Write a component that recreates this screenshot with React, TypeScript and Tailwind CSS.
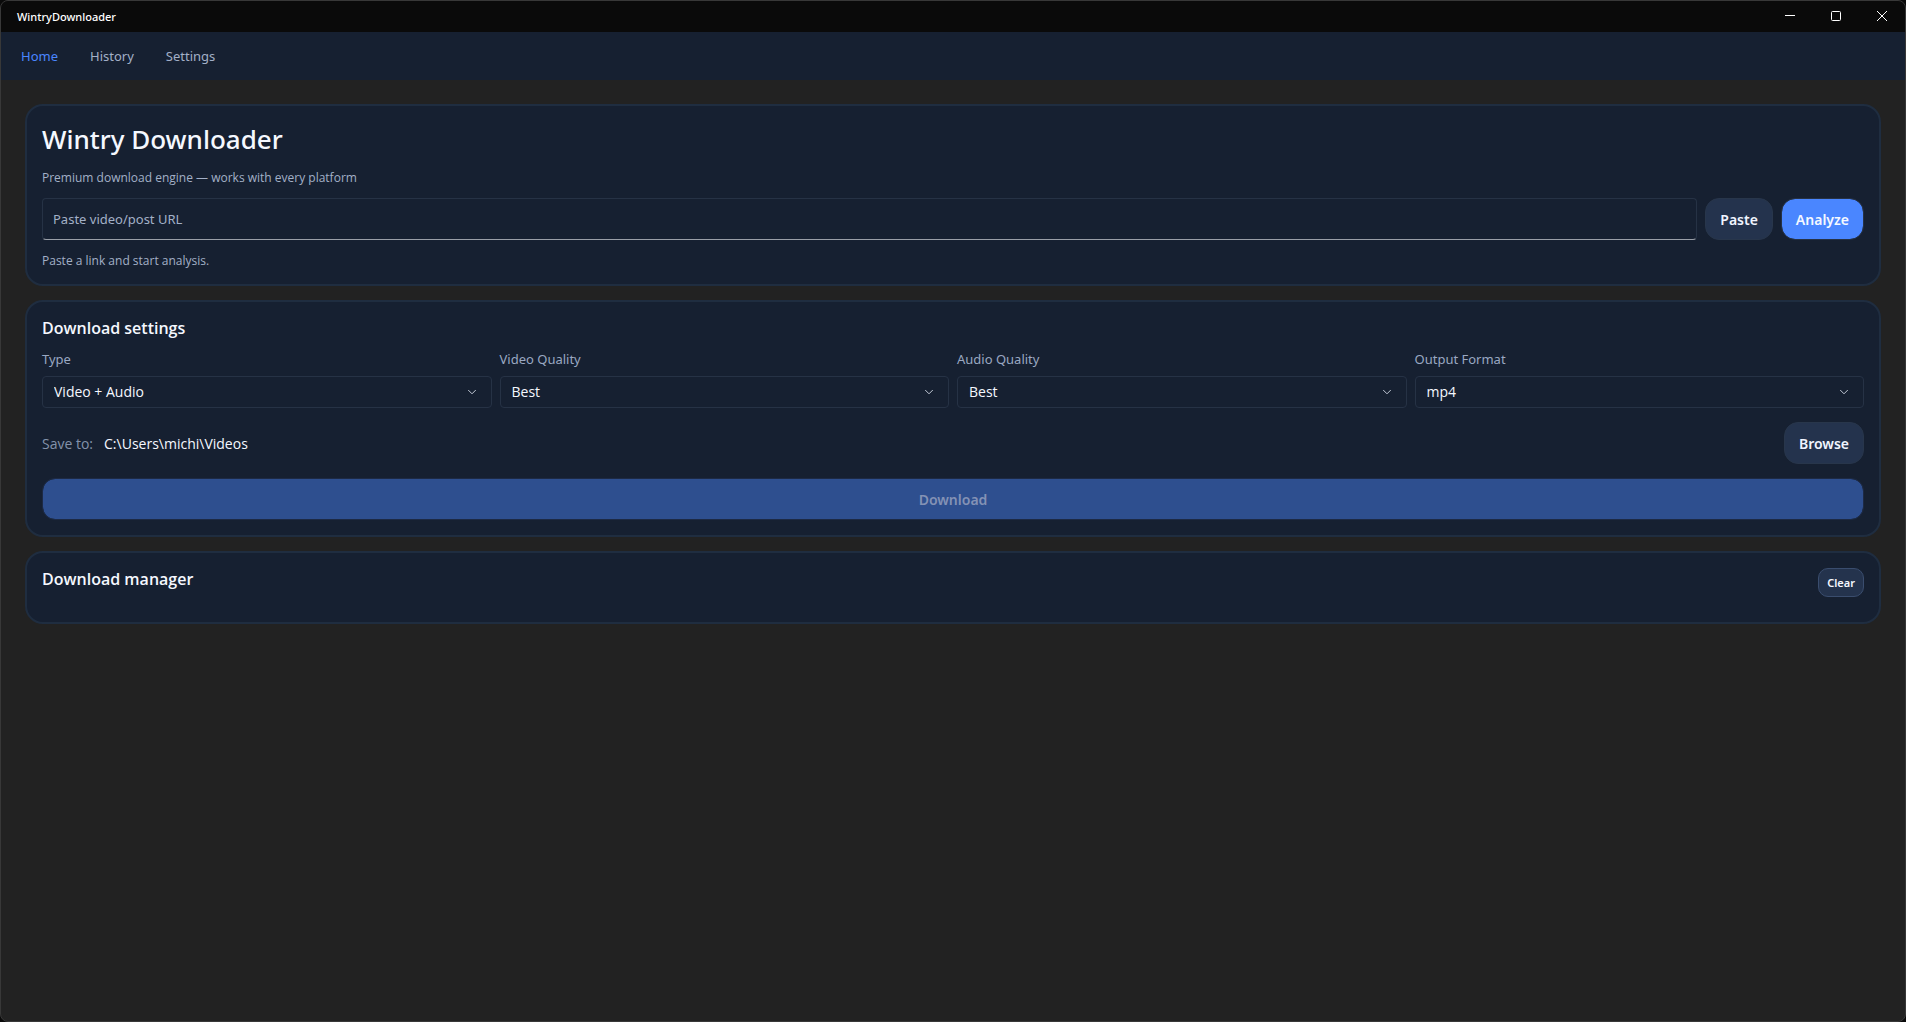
import { useState } from "react";

const tabs = ["Home", "History", "Settings"];

const fields = [
  { id: "type", label: "Type", options: ["Video + Audio", "Video only", "Audio only"] },
  { id: "video-quality", label: "Video Quality", options: ["Best", "1080p", "720p"] },
  { id: "audio-quality", label: "Audio Quality", options: ["Best", "320k", "128k"] },
  { id: "output-format", label: "Output Format", options: ["mp4", "mkv", "webm"] },
];

const cardClass = "rounded-[18px] border-2 border-[#1f2d40] bg-[#162031] p-[15px]";
const headingClass = "font-['Open_Sans',sans-serif] text-base font-semibold leading-[22px] text-[#f5f8ff]";
const noteClass = "font-['Open_Sans',sans-serif] text-xs leading-4 text-[#a3b0c7]";
const secondaryClass =
  "h-[42px] shrink-0 rounded-[14px] border border-[#28364b] bg-[#24334d] px-[14px] pt-0.5 text-sm font-semibold text-[#f1f5ff]";

function TitleBar() {
  return (
    <header className="flex h-[31px] shrink-0 items-center justify-between bg-[#0a0a0a] pl-4 text-white">
      <span className="text-[11px] font-medium leading-4">WintryDownloader</span>
      <div className="flex h-[30px] self-start">
        <button aria-label="Minimize" className="flex w-[46px] items-center justify-center">
          <svg width="10" height="10" viewBox="0 0 10 10" stroke="currentColor" fill="none">
            <path d="M0 4.5H10" />
          </svg>
        </button>
        <button aria-label="Maximize" className="flex w-[46px] items-center justify-center">
          <svg width="10" height="10" viewBox="0 0 10 10" stroke="currentColor" fill="none">
            <rect x="0.5" y="0.5" width="9" height="9" rx="1" />
          </svg>
        </button>
        <button aria-label="Close" className="flex w-[46px] items-center justify-center">
          <svg width="10" height="10" viewBox="0 0 10 10" stroke="currentColor" fill="none">
            <path d="M0 0L10 10M10 0L0 10" />
          </svg>
        </button>
      </div>
    </header>
  );
}

function SelectField({ id, label, options }: { id: string; label: string; options: string[] }) {
  return (
    <div className="flex flex-col gap-[7px]">
      <label htmlFor={id} className="text-[13px] leading-5 text-[#9aa8c2]">
        {label}
      </label>
      <div className="relative">
        <select
          id={id}
          className="block h-8 w-full appearance-none rounded border border-[#263245] bg-[#162031] pl-[11px] pr-8 font-['Open_Sans',sans-serif] text-sm text-[#f5f8ff]"
        >
          {options.map((o) => (
            <option key={o}>{o}</option>
          ))}
        </select>
        <svg
          className="pointer-events-none absolute right-4 top-3 text-[#c3cad6]"
          width="8"
          height="8"
          viewBox="0 0 8 8"
          fill="none"
          stroke="currentColor"
          strokeLinecap="round"
          strokeLinejoin="round"
        >
          <path d="M0.5 2.3L4 5.8L7.5 2.3" />
        </svg>
      </div>
    </div>
  );
}

export default function App() {
  const [active, setActive] = useState("Home");
  const [url, setUrl] = useState("");

  return (
    <div className="min-h-screen bg-[#0a0a0a] font-['Noto_Sans',sans-serif]">
      <div className="flex min-h-screen flex-col overflow-hidden rounded-lg border border-[#383838] bg-[#222222]">
        <TitleBar />
        <nav className="flex h-12 shrink-0 items-center gap-8 bg-[#162031] px-5 pt-0.5 text-[13px]">
          {tabs.map((t) => (
            <button
              key={t}
              onClick={() => setActive(t)}
              className={t === active ? "text-[#4a86ff]" : "text-[#a3b0c7]"}
            >
              {t}
            </button>
          ))}
        </nav>

        <main className="flex flex-col gap-[14px] p-6">
          <section className={cardClass}>
            <h1 className="text-[26px] font-medium leading-9 text-[#f5f8ff]">Wintry Downloader</h1>
            <p className={`mt-[13px] ${noteClass}`}>Premium download engine — works with every platform</p>
            <div className="mt-3 flex gap-2">
              <input
                aria-label="Video or post URL"
                placeholder="Paste video/post URL"
                value={url}
                onChange={(e) => setUrl(e.target.value)}
                className="h-[42px] min-w-0 flex-1 rounded border border-[#263245] border-b-[#9a9fa8] bg-[#162031] px-[10px] text-[13px] text-[#f5f8ff] placeholder:text-[#a3b0c7]"
              />
              <button className={secondaryClass}>Paste</button>
              <button className="h-[42px] shrink-0 rounded-[14px] border border-[#263245] bg-[#4a86ff] bg-clip-padding px-[14px] pt-0.5 text-sm font-semibold text-[#f5f8ff]">
                Analyze
              </button>
            </div>
            <p className={`mt-[13px] ${noteClass}`}>Paste a link and start analysis.</p>
          </section>

          <section className={cardClass}>
            <h2 className={headingClass}>Download settings</h2>
            <div className="mt-[10px] grid grid-cols-4 gap-2">
              {fields.map((f) => (
                <SelectField key={f.id} {...f} />
              ))}
            </div>
            <div className="mt-[14px] flex items-center gap-[11px] text-sm">
              <span className="pt-0.5 font-['Open_Sans',sans-serif] text-[#8492ab]">Save to:</span>
              <span className="flex-1 pt-0.5 font-['Open_Sans',sans-serif] text-[#f5f8ff]">C:\Users\michi\Videos</span>
              <button className={secondaryClass}>Browse</button>
            </div>
            <button
              disabled
              className="mt-[14px] h-[42px] w-full rounded-[13px] border border-[#1d2a45] bg-[#2e4f8f] bg-clip-padding pt-0.5 text-sm font-semibold text-[#8492b5]"
            >
              Download
            </button>
          </section>

          <section className={cardClass}>
            <div className="flex min-h-[39px] items-start justify-between">
              <h2 className={headingClass}>Download manager</h2>
              <button className="h-[29px] rounded-[10px] border border-[#3a4d6e] bg-[#24334d] px-2 pt-px text-[11px] font-semibold text-[#f5f8ff]">
                Clear
              </button>
            </div>
          </section>
        </main>
      </div>
    </div>
  );
}
